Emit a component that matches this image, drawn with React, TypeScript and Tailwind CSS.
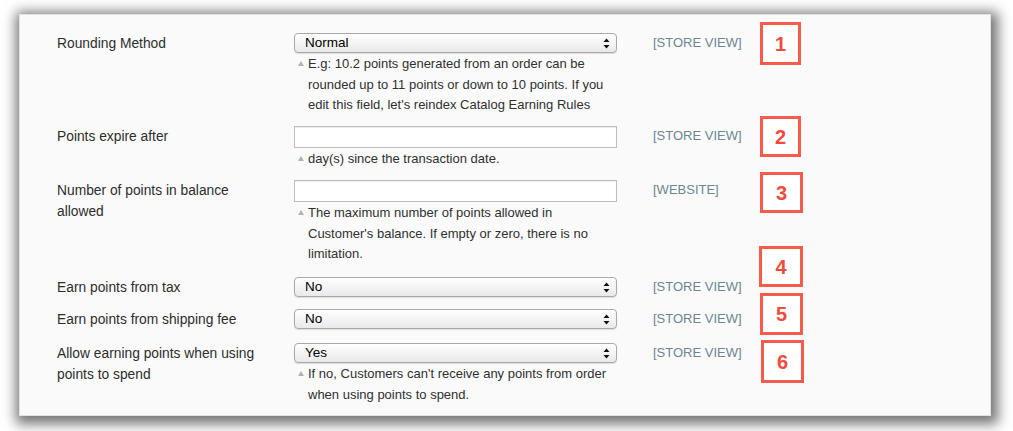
import type { ReactNode } from "react";

const FONT = { fontFamily: '"Liberation Sans", Arial, Helvetica, sans-serif' };

function SelectBox({ value }: { value: string }) {
  return (
    <div className="flex h-[20px] items-center justify-between rounded-[4px] border border-[#a9a9a9] bg-gradient-to-b from-white to-[#e9e9e9] pl-[10px] pr-[6px] text-[13.5px] text-black shadow-[0_1px_1px_rgba(0,0,0,0.12)]">
      <span>{value}</span>
      <svg width="7" height="11" viewBox="0 0 7 11">
        <path d="M3.5 0.5 L6.5 4 L0.5 4 Z" fill="#111" />
        <path d="M3.5 10.5 L6.5 7 L0.5 7 Z" fill="#111" />
      </svg>
    </div>
  );
}

function TextBox() {
  return <div className="h-[22px] border border-[#bdbdbd] bg-white shadow-[inset_0_1px_1px_rgba(0,0,0,0.08)]" />;
}

function Note({ children }: { children: ReactNode }) {
  return (
    <div className="mt-[1px] flex text-[13px] leading-[20.5px] text-[#303030]">
      <div className="w-[14px] shrink-0 pl-[4px] pt-[7px]">
        <svg width="6" height="5" viewBox="0 0 6 5">
          <path d="M3 0 L6 5 L0 5 Z" fill="#aab4b9" />
        </svg>
      </div>
      <div className="w-[309px]">{children}</div>
    </div>
  );
}

function Row({
  label,
  scope,
  className,
  children,
}: {
  label: ReactNode;
  scope: string;
  className: string;
  children: ReactNode;
}) {
  return (
    <div className={`flex items-start ${className}`}>
      <div className="w-[237px] shrink-0 pr-[24px] text-[13.8px] leading-[21px] text-[#2d2d2d]">{label}</div>
      <div className="w-[323px] shrink-0">{children}</div>
      <div className="ml-[36px] text-[13px] leading-[19px] text-[#6d8693]">{scope}</div>
    </div>
  );
}

function Marker({ n, className }: { n: number; className: string }) {
  return (
    <div
      className={`absolute flex items-center justify-center border-[3px] border-[#f65b4c] bg-white text-[20px] font-bold text-[#f24a3c] ${className}`}
    >
      {n}
    </div>
  );
}

export default function App() {
  return (
    <div className="h-[431px] w-[1013px] bg-white pl-[19px] pt-[14px]" style={FONT}>
      <div className="relative h-[402px] w-[972px] border border-[#e2e2e2] bg-[#fafafa] pl-[37px] pt-[18px] shadow-[2px_3px_12px_5px_rgba(0,0,0,0.55)]">
        <Row label="Rounding Method" scope="[STORE VIEW]" className="">
          <SelectBox value="Normal" />
          <Note>
            E.g: 10.2 points generated from an order can be rounded up to 11 points or down to 10 points. If you
            edit this field, let's reindex Catalog Earning Rules
          </Note>
        </Row>

        <Row label="Points expire after" scope="[STORE VIEW]" className="mt-[10.5px]">
          <TextBox />
          <Note>day(s) since the transaction date.</Note>
        </Row>

        <Row label="Number of points in balance allowed" scope="[WEBSITE]" className="mt-[10.5px]">
          <TextBox />
          <Note>The maximum number of points allowed in Customer's balance. If empty or zero, there is no limitation.</Note>
        </Row>

        <Row label="Earn points from tax" scope="[STORE VIEW]" className="mt-[12.5px]">
          <SelectBox value="No" />
        </Row>

        <Row label="Earn points from shipping fee" scope="[STORE VIEW]" className="mt-[11px]">
          <SelectBox value="No" />
        </Row>

        <Row label="Allow earning points when using points to spend" scope="[STORE VIEW]" className="mt-[13px]">
          <SelectBox value="Yes" />
          <Note>If no, Customers can't receive any points from order when using points to spend.</Note>
        </Row>

        {/* annotation markers */}
        <Marker n={1} className="left-[740px] top-[7px] h-[43px] w-[41px]" />
        <Marker n={2} className="left-[740px] top-[101px] h-[41px] w-[41px]" />
        <Marker n={3} className="left-[740px] top-[157px] h-[41px] w-[43px]" />
        <Marker n={4} className="left-[739px] top-[231px] h-[41px] w-[44px]" />
        <Marker n={5} className="left-[740px] top-[278px] h-[42px] w-[43px]" />
        <Marker n={6} className="left-[741px] top-[325px] h-[43px] w-[43px]" />
      </div>
    </div>
  );
}
